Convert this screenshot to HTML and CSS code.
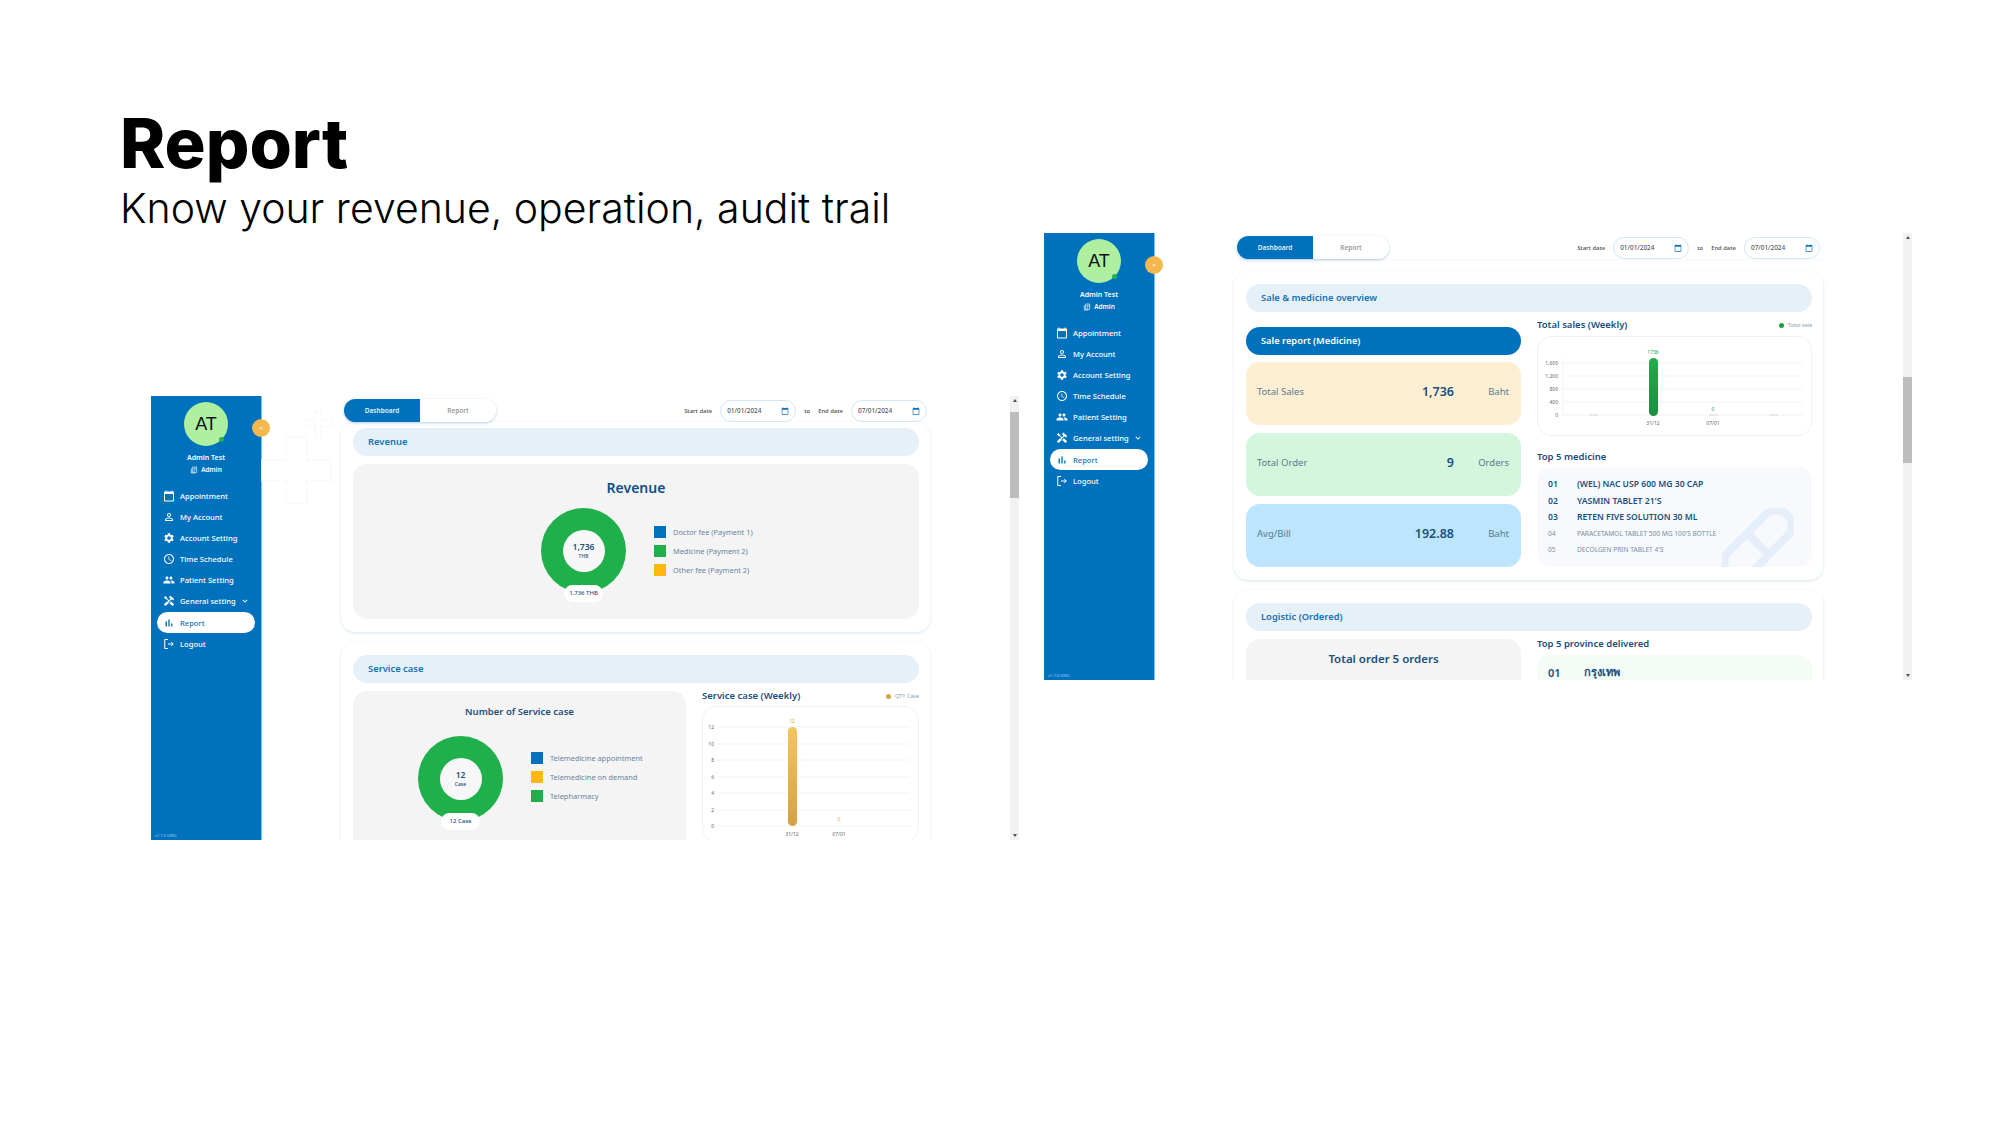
FILE: index.html
```html
<!DOCTYPE html>
<html lang="en">
<head>
  <meta charset="UTF-8">
  <title>Report</title>
  <link rel="stylesheet" href="styles.css">
</head>
<body>
  <svg class="icon-defs" width="0" height="0">
    <symbol id="i-cal" viewBox="0 0 24 24"><path d="M20 3h-1V1h-2v2H7V1H5v2H4c-1.1 0-2 .9-2 2v16c0 1.1.9 2 2 2h16c1.1 0 2-.9 2-2V5c0-1.1-.9-2-2-2zm0 18H4V8h16v13z"/></symbol>
    <symbol id="i-user" viewBox="0 0 24 24"><path d="M12 5.9c1.16 0 2.1.94 2.1 2.1s-.94 2.1-2.1 2.1S9.9 9.16 9.9 8s.94-2.1 2.1-2.1m0 9c2.97 0 6.1 1.46 6.1 2.1v1.1H5.9V17c0-.64 3.13-2.1 6.1-2.1M12 4C9.79 4 8 5.79 8 8s1.79 4 4 4 4-1.79 4-4-1.79-4-4-4zm0 9c-2.67 0-8 1.34-8 4v3h16v-3c0-2.66-5.33-4-8-4z"/></symbol>
    <symbol id="i-gear" viewBox="0 0 24 24"><path d="M19.14 12.94c.04-.3.06-.61.06-.94 0-.32-.02-.64-.07-.94l2.03-1.58c.18-.14.23-.41.12-.61l-1.92-3.32c-.12-.22-.37-.29-.59-.22l-2.39.96c-.5-.38-1.03-.7-1.62-.94l-.36-2.54c-.04-.24-.24-.41-.48-.41h-3.84c-.24 0-.43.17-.47.41l-.36 2.54c-.59.24-1.13.57-1.62.94l-2.39-.96c-.22-.08-.47 0-.59.22L2.74 8.87c-.12.21-.08.47.12.61l2.03 1.58c-.05.3-.09.63-.09.94s.02.64.07.94l-2.03 1.58c-.18.14-.23.41-.12.61l1.92 3.32c.12.22.37.29.59.22l2.39-.96c.5.38 1.03.7 1.62.94l.36 2.54c.05.24.24.41.48.41h3.84c.24 0 .44-.17.47-.41l.36-2.54c.59-.24 1.13-.56 1.62-.94l2.39.96c.22.08.47 0 .59-.22l1.92-3.32c.12-.22.07-.47-.12-.61l-2.01-1.58zM12 15.6c-1.98 0-3.6-1.62-3.6-3.6s1.62-3.6 3.6-3.6 3.6 1.62 3.6 3.6-1.62 3.6-3.6 3.6z"/></symbol>
    <symbol id="i-clock" viewBox="0 0 24 24"><path d="M11.99 2C6.47 2 2 6.48 2 12s4.47 10 9.99 10C17.52 22 22 17.52 22 12S17.52 2 11.99 2zM12 20c-4.42 0-8-3.58-8-8s3.58-8 8-8 8 3.58 8 8-3.58 8-8 8zm.5-13H11v6l5.25 3.15.75-1.23-4.5-2.67z"/></symbol>
    <symbol id="i-people" viewBox="0 0 24 24"><path d="M16 11c1.66 0 2.99-1.34 2.99-3S17.66 5 16 5c-1.66 0-3 1.34-3 3s1.34 3 3 3zm-8 0c1.66 0 2.99-1.34 2.99-3S9.66 5 8 5C6.34 5 5 6.34 5 8s1.34 3 3 3zm0 2c-2.33 0-7 1.17-7 3.5V19h14v-2.5c0-2.33-4.67-3.5-7-3.5zm8 0c-.29 0-.62.02-.97.05 1.16.84 1.97 1.97 1.97 3.45V19h6v-2.5c0-2.33-4.67-3.5-7-3.5z"/></symbol>
    <symbol id="i-tools" viewBox="0 0 24 24"><path d="M21.67 18.17l-5.3-5.3h-.99l-2.54 2.54v.99l5.3 5.3c.39.39 1.02.39 1.41 0l2.12-2.12c.39-.38.39-1.02 0-1.41z"/><path d="M17.34 10.19l1.41-1.41 2.12 2.12c1.17-1.17 1.17-3.07 0-4.24l-3.54-3.54-1.41 1.41V1.71l-.7-.71-3.54 3.54.71.71h2.83l-1.41 1.41 1.06 1.06-2.89 2.89-4.13-4.13V5.06L4.83 2.04 2 4.87 5.03 7.9h1.41l4.13 4.13-.85.85H7.6l-5.3 5.3c-.39.39-.39 1.02 0 1.41l2.12 2.12c.39.39 1.02.39 1.41 0l5.3-5.3v-2.12l5.15-5.15 1.06 1.05z"/></symbol>
    <symbol id="i-bars" viewBox="0 0 24 24"><path d="M5 9.2h3V19H5zM10.6 5h2.8v14h-2.8zm5.6 8H19v6h-2.8z"/></symbol>
    <symbol id="i-logout" viewBox="0 0 24 24"><path d="M10 3H3.5v18H10M10 12h10.5M16.5 8l4 4-4 4" fill="none" stroke="currentColor" stroke-width="2"/></symbol>
    <symbol id="i-down" viewBox="0 0 24 24"><path d="M16.59 8.59L12 13.17 7.41 8.59 6 10l6 6 6-6z"/></symbol>
    <symbol id="i-badge" viewBox="0 0 24 24"><path d="M8 3h12v16H8zM4 7v14h12M11 7h6M11 11h6M11 15h4" fill="none" stroke="currentColor" stroke-width="2"/></symbol>
    <linearGradient id="gold" x1="0" y1="0" x2="0" y2="1"><stop offset="0" stop-color="#f3c55f"/><stop offset="1" stop-color="#d4a245"/></linearGradient>
    <linearGradient id="green" x1="0" y1="0" x2="0" y2="1"><stop offset="0" stop-color="#22ac4b"/><stop offset="1" stop-color="#1b8f3f"/></linearGradient>
  </svg>

  <header class="intro">
    <h1>Report</h1>
    <p>Know your revenue, operation, audit trail</p>
  </header>

  <!-- first screenshot: revenue + service case -->
  <section class="shot shot-left">
    <aside class="side">
      <div class="avatar">AT<span class="online"></span></div>
      <button class="toggle">&lt;</button>
      <div class="who">Admin Test</div>
      <div class="role"><svg class="ic-badge"><use href="#i-badge"/></svg>Admin</div>
      <nav class="nav">
        <a><svg><use href="#i-cal"/></svg>Appointment</a>
        <a><svg><use href="#i-user"/></svg>My Account</a>
        <a><svg><use href="#i-gear"/></svg>Account Setting</a>
        <a><svg><use href="#i-clock"/></svg>Time Schedule</a>
        <a><svg><use href="#i-people"/></svg>Patient Setting</a>
        <a><svg><use href="#i-tools"/></svg>General setting<svg class="caret"><use href="#i-down"/></svg></a>
        <a class="active"><svg><use href="#i-bars"/></svg>Report</a>
        <a><svg><use href="#i-logout"/></svg>Logout</a>
      </nav>
      <div class="version">v1.7.0 (090)</div>
    </aside>
    <svg class="crosses" width="80" height="110" viewBox="0 0 80 110">
      <path d="M25 35h21v23h24v21H46v22H25V79H1V58h24zM54 10h6v8h11v6H60v11h-6V24H44v-6h10z"/>
    </svg>
    <div class="main">
      <div class="topbar">
        <div class="tabs"><span class="tab on">Dashboard</span><span class="tab">Report</span></div>
        <div class="dates">
          <span>Start date</span><span class="date">01/01/2024<svg><use href="#i-cal"/></svg></span>
          <span>to</span>
          <span>End date</span><span class="date">07/01/2024<svg><use href="#i-cal"/></svg></span>
        </div>
      </div>
      <div class="card card-tight">
        <div class="sec-head">Revenue</div>
        <div class="grey grey-revenue">
          <h2 class="rev-title">Revenue</h2>
          <div class="pie-row">
            <div class="donut">
              <div class="hole"><b>1,736</b><small>THB</small></div>
              <span class="pill">1,736 THB</span>
            </div>
            <ul class="legend">
              <li><i class="sw-blue"></i>Doctor fee (Payment 1)</li>
              <li><i class="sw-green"></i>Medicine (Payment 2)</li>
              <li><i class="sw-amber"></i>Other fee (Payment 2)</li>
            </ul>
          </div>
        </div>
      </div>
      <div class="card">
        <div class="sec-head">Service case</div>
        <div class="cols cols-service">
          <div class="grey grey-service">
            <h3 class="svc-title">Number of Service case</h3>
            <div class="pie-row pie-service">
              <div class="donut">
                <div class="hole"><b>12</b><small>Case</small></div>
                <span class="pill">12 Case</span>
              </div>
              <ul class="legend">
                <li><i class="sw-blue"></i>Telemedicine appointment</li>
                <li><i class="sw-amber"></i>Telemedicine on demand</li>
                <li><i class="sw-green"></i>Telepharmacy</li>
              </ul>
            </div>
          </div>
          <div>
            <div class="chart-head">
              <h4>Service case (Weekly)</h4>
              <span class="key"><i class="dot-gold"></i>QTY Case</span>
            </div>
            <div class="chart chart-service">
              <svg width="217" height="134" viewBox="0 0 217 134">
                <g class="grid">
                  <path d="M15 21h193M15 38h193M15 54h193M15 71h193M15 87h193M15 104h193M15 120h193"/>
                </g>
                <g class="ticks" text-anchor="end">
                  <text x="12" y="23">12</text><text x="12" y="40">10</text><text x="12" y="56">8</text><text x="12" y="73">6</text><text x="12" y="89">4</text><text x="12" y="106">2</text><text x="12" y="122">0</text>
                </g>
                <rect x="86" y="21" width="9" height="99" rx="4.5" fill="url(#gold)"/>
                <g class="ticks" text-anchor="middle">
                  <text x="90" y="130">31/12</text><text x="137" y="130">07/01</text>
                </g>
                <g class="ticks tick-gold" text-anchor="middle">
                  <text x="90" y="17">12</text><text x="137" y="115">0</text>
                </g>
              </svg>
            </div>
          </div>
        </div>
      </div>
    </div>
    <div class="scroll"><span class="arrow-up"></span><span class="thumb thumb-left"></span><span class="arrow-down"></span></div>
  </section>

  <!-- second screenshot: sales + logistics -->
  <section class="shot shot-right">
    <aside class="side">
      <div class="avatar">AT<span class="online"></span></div>
      <button class="toggle">&lt;</button>
      <div class="who">Admin Test</div>
      <div class="role"><svg class="ic-badge"><use href="#i-badge"/></svg>Admin</div>
      <nav class="nav">
        <a><svg><use href="#i-cal"/></svg>Appointment</a>
        <a><svg><use href="#i-user"/></svg>My Account</a>
        <a><svg><use href="#i-gear"/></svg>Account Setting</a>
        <a><svg><use href="#i-clock"/></svg>Time Schedule</a>
        <a><svg><use href="#i-people"/></svg>Patient Setting</a>
        <a><svg><use href="#i-tools"/></svg>General setting<svg class="caret"><use href="#i-down"/></svg></a>
        <a class="active"><svg><use href="#i-bars"/></svg>Report</a>
        <a><svg><use href="#i-logout"/></svg>Logout</a>
      </nav>
      <div class="version">v1.7.0 (090)</div>
    </aside>
    <div class="main">
      <div class="topbar topbar-line">
        <div class="tabs"><span class="tab on">Dashboard</span><span class="tab">Report</span></div>
        <div class="dates">
          <span>Start date</span><span class="date">01/01/2024<svg><use href="#i-cal"/></svg></span>
          <span>to</span>
          <span>End date</span><span class="date">07/01/2024<svg><use href="#i-cal"/></svg></span>
        </div>
      </div>
      <div class="card card-sales">
        <div class="sec-head">Sale &amp; medicine overview</div>
        <div class="cols cols-even">
          <div class="sales">
            <div class="sale-title">Sale report (Medicine)</div>
            <div class="stat stat-orange"><span>Total Sales</span><b>1,736</b><em>Baht</em></div>
            <div class="stat stat-green"><span>Total Order</span><b>9</b><em>Orders</em></div>
            <div class="stat stat-blue"><span>Avg/Bill</span><b>192.88</b><em>Baht</em></div>
          </div>
          <div class="sales-side">
            <div class="chart-head">
              <h4>Total sales (Weekly)</h4>
              <span class="key"><i class="dot-green"></i>Total sale</span>
            </div>
            <div class="chart chart-sales">
              <svg width="275" height="100" viewBox="0 0 275 100">
                <g class="grid">
                  <path d="M26 27h240M26 40h240M26 53h240M26 66h240M26 79h240M26 22v58"/>
                </g>
                <g class="ticks" text-anchor="end">
                  <text x="21" y="29">1,600</text><text x="21" y="42">1,200</text><text x="21" y="55">800</text><text x="21" y="68">400</text><text x="21" y="81">0</text>
                </g>
                <path class="zero" d="M52 79h9M172 79h9M232 79h9"/>
                <rect x="112" y="22" width="9" height="58" rx="4.5" fill="url(#green)"/>
                <g class="ticks" text-anchor="middle">
                  <text x="116" y="89">31/12</text><text x="176" y="89">07/01</text>
                </g>
                <g class="ticks tick-green" text-anchor="middle">
                  <text x="116" y="18">1736</text><text x="176" y="75">0</text>
                </g>
              </svg>
            </div>
            <h4 class="list-title">Top 5 medicine</h4>
            <div class="top-list">
              <ol>
                <li class="lead"><span>01</span>(WEL) NAC USP 600 MG 30 CAP</li>
                <li class="lead"><span>02</span>YASMIN TABLET 21'S</li>
                <li class="lead"><span>03</span>RETEN FIVE SOLUTION 30 ML</li>
                <li><span>04</span>PARACETAMOL TABLET 500 MG 100'S BOTTLE</li>
                <li><span>05</span>DECOLGEN PRIN TABLET 4'S</li>
              </ol>
              <svg class="pill-mark" width="80" height="80" viewBox="0 0 80 80">
                <g transform="rotate(45 40 40)" fill="none" stroke="#e6eff9" stroke-width="9">
                  <rect x="23" y="-6" width="34" height="92" rx="17"/>
                  <path d="M23 40h34"/>
                </g>
              </svg>
            </div>
          </div>
        </div>
      </div>
      <div class="card">
        <div class="sec-head">Logistic (Ordered)</div>
        <div class="cols cols-even cols-logistic">
          <div class="grey grey-orders">Total order 5 orders</div>
          <div>
            <h4 class="list-title province-title">Top 5 province delivered</h4>
            <div class="province"><span>01</span>กรุงเทพ</div>
          </div>
        </div>
      </div>
    </div>
    <div class="scroll"><span class="arrow-up"></span><span class="thumb thumb-right"></span><span class="arrow-down"></span></div>
  </section>
</body>
</html>
```

FILE: styles.css
```css
* { box-sizing: border-box; }

body {
  margin: 0;
  width: 2000px;
  height: 1125px;
  position: relative;
  overflow: hidden;
  background: #fff;
  font-family: "Noto Sans", sans-serif;
  color: #1a4f80;
}

.icon-defs { position: absolute; }

/* slide heading */
.intro { padding: 106px 0 0 120px; color: #000; }
.intro h1 {
  margin: 0;
  font-family: Inter, sans-serif;
  font-size: 68.5px;
  font-weight: 800;
  line-height: 76px;
}
.intro p {
  margin: 1px 0 0;
  font-family: Inter, sans-serif;
  font-size: 41px;
  font-weight: 300;
  line-height: 50px;
}

/* the two screenshots sit freely on the slide */
.shot {
  position: absolute;
  width: 868px;
  display: grid;
  grid-template-columns: 111px 748px 9px;
}
.shot-left { left: 151px; top: 396px; height: 444px; }
.shot-right { left: 1044px; top: 233px; height: 447px; }

/* sidebar */
.side {
  position: relative;
  background: #0071bc;
  border-right: 1px solid #7cc0ee;
  color: #fff;
  padding-top: 6px;
  text-align: center;
}
.avatar {
  position: relative;
  width: 44px;
  height: 44px;
  margin: 0 auto;
  border-radius: 50%;
  background: #aef0a0;
  color: #111;
  font-family: "Liberation Sans", sans-serif;
  font-size: 18px;
  line-height: 44px;
}
.online {
  position: absolute;
  right: 4px;
  bottom: 4px;
  width: 5px;
  height: 5px;
  border-radius: 50%;
  background: #22b14c;
}
.toggle {
  position: absolute;
  left: 101px;
  top: 23px;
  z-index: 2;
  width: 18px;
  height: 18px;
  padding: 0;
  border: 0;
  border-radius: 50%;
  background: #f4b84f;
  color: #fff;
  font: 700 6px/18px "Noto Sans", sans-serif;
}
.who { margin-top: 6px; font-size: 7px; font-weight: 600; line-height: 12px; }
.role {
  display: flex;
  justify-content: center;
  align-items: center;
  gap: 3px;
  font-size: 6.5px;
  font-weight: 600;
  line-height: 12px;
}
.ic-badge { width: 8px; height: 8px; color: #fff; fill: currentColor; }

.nav { margin: 9px 0 0 6px; width: 98px; text-align: left; }
.nav a {
  display: flex;
  align-items: center;
  height: 21px;
  margin-bottom: .2px;
  padding-left: 6px;
  font-size: 7.6px;
  font-weight: 500;
  color: #fff;
}
.nav a svg { width: 12px; height: 12px; margin-right: 5px; fill: currentColor; color: inherit; flex: none; }
.nav a .caret { width: 10px; height: 10px; margin: 0 0 0 4px; }
.nav a.active { background: #fff; color: #1273b8; border-radius: 11px; }
.version {
  position: absolute;
  left: 4px;
  bottom: 2px;
  font-size: 4px;
  color: #a9d3ef;
}

/* faint watermark next to the left sidebar */
.crosses { position: absolute; left: 110px; top: 6px; fill: none; stroke: #f7fbf7; stroke-width: 1.5; }

/* main column */
.main { position: relative; height: 100%; overflow: hidden; padding: 3px 0 0 79px; width: 748px; }
.topbar {
  position: relative;
  z-index: 1;
  display: flex;
  justify-content: space-between;
  align-items: center;
  width: 589px;
  height: 23px;
  padding: 0 3px;
}
.topbar-line { box-shadow: 0 3px 2px -2px #f3f7fb; }
.tabs {
  display: flex;
  height: 23px;
  border-radius: 12px;
  overflow: hidden;
  box-shadow: 0 1px 3px rgba(0, 90, 160, .3);
}
.tab {
  width: 76px;
  background: #fff;
  color: #999;
  font-size: 6.5px;
  font-weight: 600;
  line-height: 23px;
  text-align: center;
}
.tab.on { background: #0071bc; color: #e6f2fa; }
.dates {
  display: flex;
  align-items: center;
  gap: 8px;
  font-size: 5.8px;
  font-weight: 600;
  color: #5c5c5c;
}
.date {
  display: flex;
  justify-content: space-between;
  align-items: center;
  width: 76px;
  height: 22px;
  padding: 0 6px;
  border: 1px solid #d5e6f3;
  border-radius: 11px;
  font-size: 6.4px;
  font-weight: 500;
  color: #555;
}
.date svg { width: 8px; height: 8px; fill: #1273b8; }

/* cards */
.card {
  width: 589px;
  margin-top: 10px;
  padding: 13px 11px 13px 12px;
  background: #fff;
  border-radius: 14px;
  box-shadow: 0 1px 3px rgba(0, 113, 188, .18);
}
.card-tight { margin-top: 0; padding-top: 6px; }
.card-sales { margin-top: 13px; padding-top: 12px; }
.sec-head {
  height: 28px;
  padding-left: 15px;
  border-radius: 14px;
  background: #e6f0f8;
  color: #1273b8;
  font-size: 9.4px;
  font-weight: 600;
  line-height: 28px;
}
.grey { background: #f4f4f4; border-radius: 14px; }
.grey-revenue { height: 155px; margin-top: 8px; padding-top: 14px; }
.rev-title {
  margin: 0;
  color: #0d4f8b;
  font-size: 14px;
  font-weight: 600;
  line-height: 20px;
  text-align: center;
}

.pie-row { display: flex; align-items: center; gap: 28px; margin-top: 10px; padding-left: 188px; }
.pie-service { margin-top: 17px; padding-left: 65px; }
.pie-service .legend { margin-bottom: 4px; }
.donut {
  position: relative;
  flex: none;
  display: flex;
  justify-content: center;
  align-items: center;
  width: 85px;
  height: 85px;
  border-radius: 50%;
  background: #1fb04b;
}
.hole {
  display: flex;
  flex-direction: column;
  justify-content: center;
  align-items: center;
  width: 42px;
  height: 42px;
  border-radius: 50%;
  background: #f7f7f7;
  color: #1a4f80;
}
.hole b { font-size: 8.5px; font-weight: 600; line-height: 10px; }
.hole small { font-size: 5px; font-weight: 500; line-height: 8px; }
.pill {
  position: absolute;
  left: 23px;
  bottom: -9px;
  width: 39px;
  height: 17px;
  border-radius: 9px;
  background: #fff;
  color: #1a4f80;
  font-size: 6px;
  font-weight: 500;
  line-height: 17px;
  text-align: center;
}
.legend { margin: 0; padding: 0; list-style: none; }
.legend li {
  display: flex;
  align-items: center;
  gap: 7px;
  height: 12px;
  margin-bottom: 7px;
  color: #6b84a0;
  font-size: 7.4px;
  white-space: nowrap;
}
.legend li:last-child { margin-bottom: 0; }
.legend i { width: 12px; height: 12px; flex: none; }
.sw-blue { background: #0071bc; }
.sw-green { background: #1fb04b; }
.sw-amber { background: #fdb80f; }

.cols { display: grid; gap: 16px; }
.cols-service { grid-template-columns: 333px 217px; margin-top: 8px; }
.cols-even { grid-template-columns: 275px 275px; margin-top: 7px; }
.grey-service { height: 170px; padding-top: 14px; }
.svc-title {
  margin: 0;
  color: #1a4f80;
  font-size: 9.5px;
  font-weight: 600;
  line-height: 14px;
  text-align: center;
}

.chart-head { display: flex; justify-content: space-between; align-items: center; height: 10px; }
.sales-side .chart-head { margin-top: 1px; }
.chart-head h4, .list-title {
  margin: 0;
  color: #1a4f80;
  font-size: 9.5px;
  font-weight: 600;
  line-height: 12px;
}
.key { display: flex; align-items: center; gap: 4px; color: #8aa0b5; font-size: 5.5px; }
.key i { width: 5px; height: 5px; border-radius: 50%; }
.dot-gold { background: #d9a441; }
.dot-green { background: #1f9d45; }
.chart {
  margin-top: 5px;
  border: 1px solid #eef1f8;
  border-radius: 14px;
}
.chart svg { display: block; margin: -1px; }
.chart-sales { margin-top: 6px; height: 100px; }
.chart-service { height: 136px; }
.grid path { stroke: #f1f3f6; stroke-width: 1; fill: none; }
.zero { stroke: #d8d8d8; fill: none; }
.ticks text { fill: #666; font-size: 5px; font-family: "Noto Sans", sans-serif; }
.tick-gold text { fill: #d9a441; }
.tick-green text { fill: #1f9d45; }

/* sales column */
.sales { padding-top: 8px; }
.sale-title {
  height: 28px;
  margin-bottom: -1px;
  padding-left: 15px;
  border-radius: 14px;
  background: #0071bc;
  color: #fff;
  font-size: 9.3px;
  font-weight: 600;
  line-height: 28px;
}
.stat {
  display: grid;
  grid-template-columns: 1fr 60px 55px;
  align-items: center;
  height: 63px;
  margin-top: 8px;
  padding: 0 12px 0 11px;
  border-radius: 14px;
  color: #5a7a90;
  font-size: 9.5px;
}
.stat b { padding-top: 1px; color: #1a4f80; font-size: 12.5px; font-weight: 600; text-align: right; }
.stat em { font-style: normal; text-align: right; }
.stat span, .stat b, .stat em { margin-top: -5px; }
.stat-orange { background: #feeed2; }
.stat-green { background: #d3f6dd; }
.stat-blue { background: #bde5fd; }

.list-title { margin-top: 15px; }
.top-list {
  position: relative;
  height: 100px;
  margin-top: 4px;
  padding: 9px 11px;
  overflow: hidden;
  border-radius: 14px;
  background: #f7f9fd;
}
.top-list ol { position: relative; z-index: 1; margin: 0; padding: 0; list-style: none; }
.top-list li {
  display: flex;
  height: 16.4px;
  align-items: center;
  color: #7a8ea3;
  font-size: 6.6px;
  white-space: nowrap;
}
.top-list li span { width: 29px; flex: none; }
.top-list li.lead { color: #1a4f80; font-size: 8.6px; font-weight: 600; }
.pill-mark { position: absolute; left: 185px; top: 41px; width: 72px; height: 72px; }

/* logistic block */
.cols-logistic { margin-top: 8px; }
.grey-orders {
  height: 60px;
  padding-top: 11px;
  color: #1a4f80;
  font-size: 11.5px;
  font-weight: 600;
  line-height: 18px;
  text-align: center;
}
.province-title { margin-top: -1px; }
.province {
  display: flex;
  align-items: center;
  height: 40px;
  margin-top: 5px;
  padding: 0 11px 6px;
  border-radius: 14px;
  background: #f5fbf5;
  color: #1a4f80;
  font-size: 11px;
  font-weight: 600;
}
.province span { width: 36px; }

/* fake scrollbar of the screenshot */
.scroll { position: relative; background: #f1f1f1; }
.thumb { position: absolute; left: 0; width: 9px; background: #bdbdbd; }
.thumb-left { top: 16px; height: 86px; }
.thumb-right { top: 144px; height: 86px; }
.arrow-up, .arrow-down {
  position: absolute;
  left: 2.5px;
  border-left: 2px solid transparent;
  border-right: 2px solid transparent;
}
.arrow-up { top: 3px; border-bottom: 3px solid #505050; }
.arrow-down { bottom: 3px; border-top: 3px solid #505050; }
```
